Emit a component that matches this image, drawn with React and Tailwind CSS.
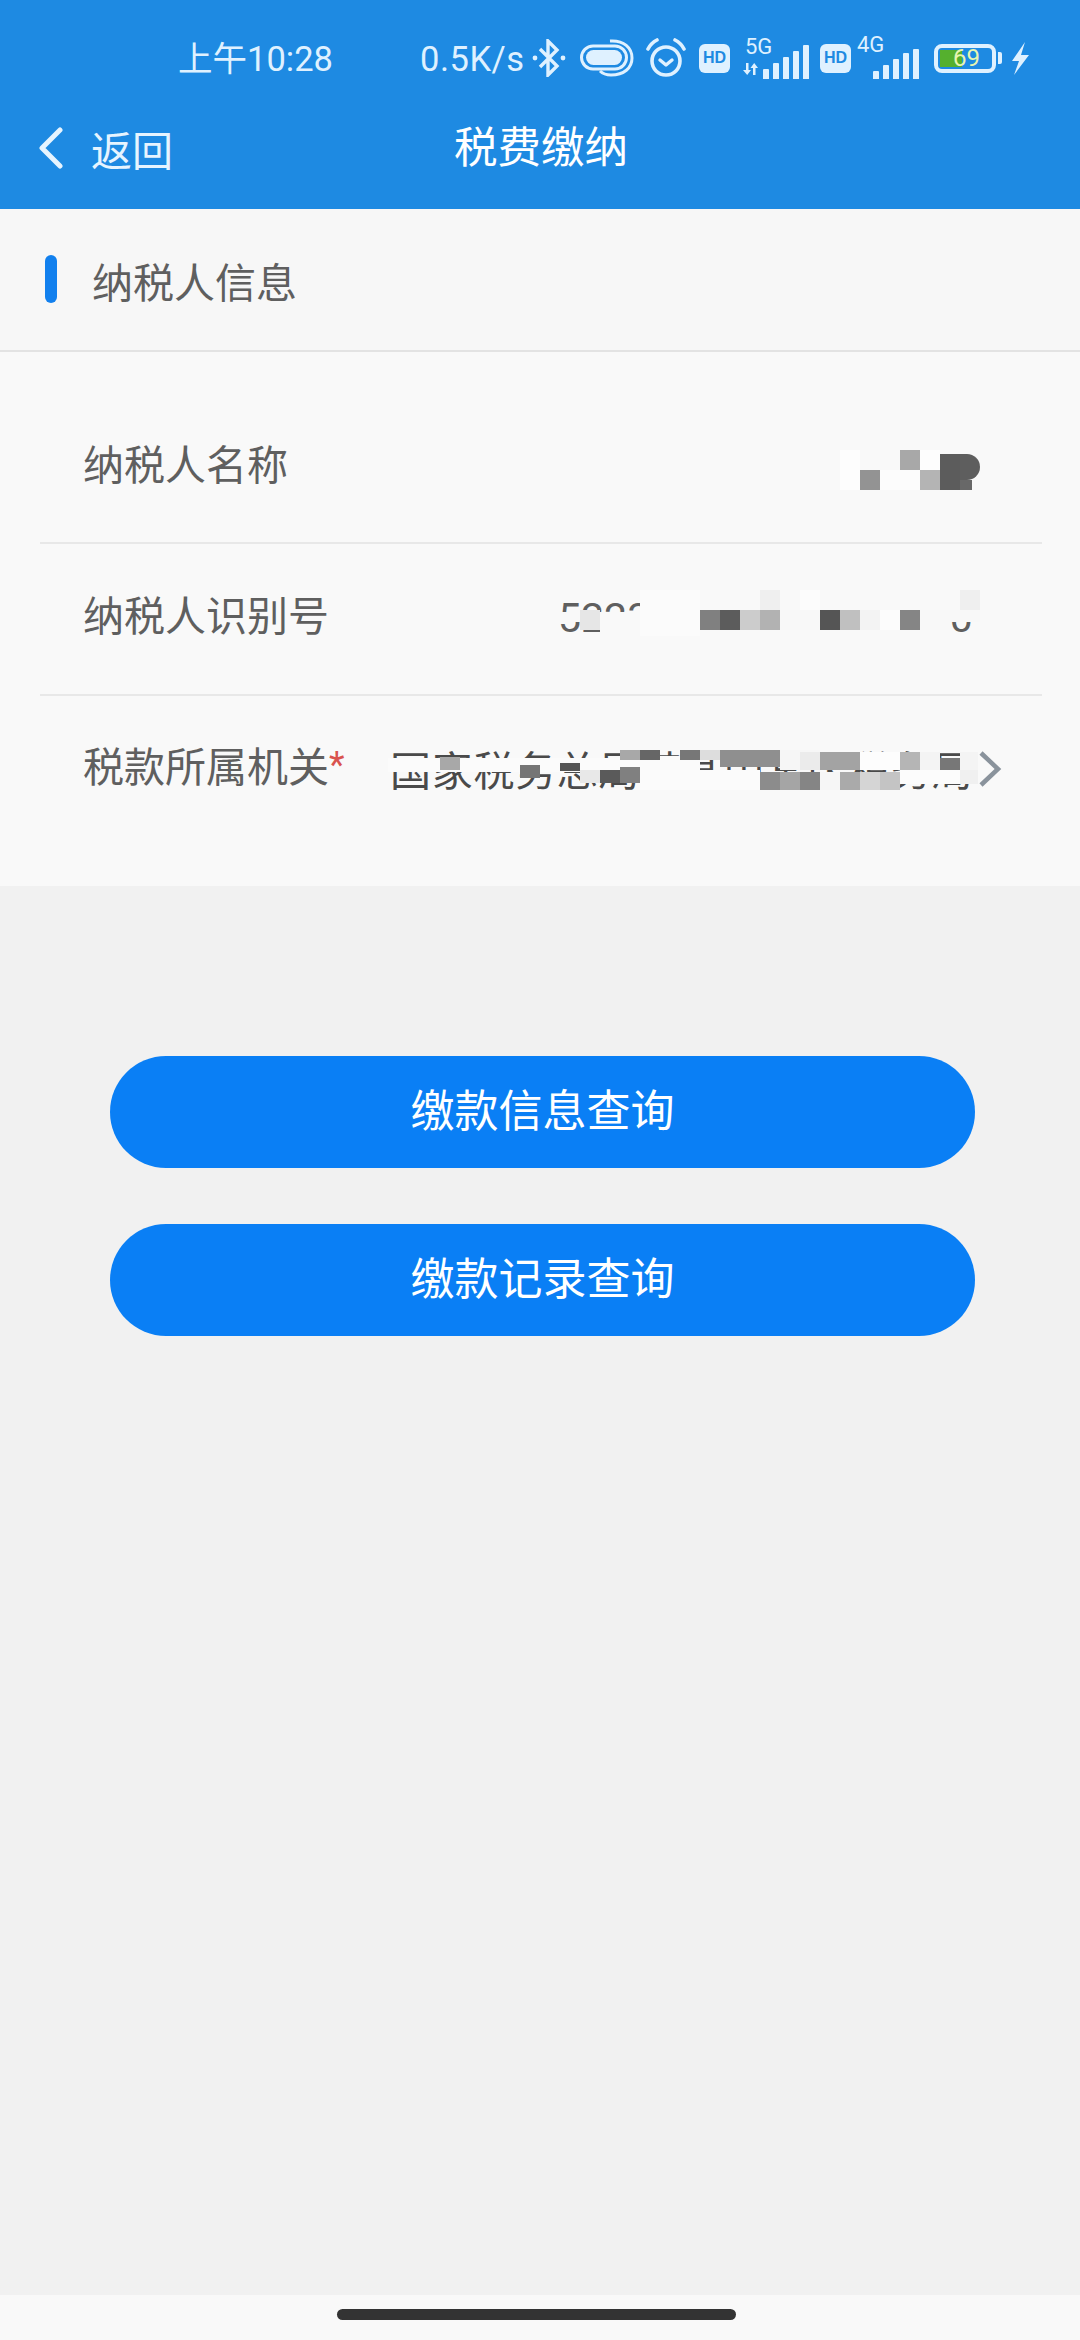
import React from 'react';

// pixelated privacy blur over the values, coordinates are page pixels
const nameCells = [
  { x: 836, y: 440, w: 150, h: 54, c: '#f9f9f9' },
  { x: 840, y: 450, w: 20, h: 40, c: '#fdfdfd' },
  { x: 880, y: 470, w: 40, h: 20, c: '#fcfcfc' },
  { x: 900, y: 450, w: 20, h: 20, c: '#a8a8a8' },
  { x: 920, y: 450, w: 20, h: 20, c: '#fdfdfd' },
  { x: 860, y: 470, w: 20, h: 20, c: '#939393' },
  { x: 920, y: 470, w: 20, h: 20, c: '#b4b4b4' },
  { x: 940, y: 454, w: 20, h: 36, c: '#5c5c5c' },
  { x: 960, y: 454, w: 20, h: 26, c: '#5e5e5e', r: '0 14px 14px 0' },
  { x: 960, y: 480, w: 12, h: 10, c: '#686868' },
];

const idCells = [
  { x: 556, y: 612, w: 104, h: 10, c: '#f9f9f9' },
  { x: 580, y: 610, w: 20, h: 20, c: '#e6e6e6' },
  { x: 600, y: 622, w: 60, h: 14, c: '#f9f9f9' },
  { x: 640, y: 590, w: 60, h: 46, c: '#fbfbfb' },
  { x: 700, y: 590, w: 280, h: 20, c: '#f9f9f9' },
  { x: 760, y: 590, w: 20, h: 20, c: '#efefef' },
  { x: 800, y: 590, w: 20, h: 20, c: '#fcfcfc' },
  { x: 960, y: 590, w: 20, h: 20, c: '#efefef' },
  { x: 700, y: 630, w: 250, h: 6, c: '#f9f9f9' },
  { x: 700, y: 610, w: 20, h: 20, c: '#808080' },
  { x: 720, y: 610, w: 20, h: 20, c: '#5c5c5c' },
  { x: 740, y: 610, w: 20, h: 20, c: '#cccccc' },
  { x: 760, y: 610, w: 20, h: 20, c: '#b2b2b2' },
  { x: 780, y: 610, w: 40, h: 20, c: '#f8f8f8' },
  { x: 820, y: 610, w: 20, h: 20, c: '#555555' },
  { x: 840, y: 610, w: 20, h: 20, c: '#c0c0c0' },
  { x: 860, y: 610, w: 20, h: 20, c: '#f3f3f3' },
  { x: 880, y: 610, w: 20, h: 20, c: '#fcfcfc' },
  { x: 900, y: 610, w: 20, h: 20, c: '#858585' },
  { x: 920, y: 610, w: 30, h: 20, c: '#f8f8f8' },
  { x: 950, y: 610, w: 30, h: 12, c: '#f8f8f8' },
];

const officeCells = [
  { x: 388, y: 758, w: 252, h: 14, c: '#fbfbfb' },
  { x: 640, y: 756, w: 60, h: 16, c: '#fafafa' },
  { x: 440, y: 757, w: 20, h: 13, c: '#a8a8a8' },
  { x: 520, y: 765, w: 20, h: 13, c: '#757575' },
  { x: 560, y: 763, w: 20, h: 8, c: '#555555' },
  { x: 580, y: 770, w: 20, h: 13, c: '#e8e8e8' },
  { x: 600, y: 770, w: 20, h: 13, c: '#5a5a5a' },
  { x: 620, y: 767, w: 20, h: 16, c: '#808080' },
  { x: 620, y: 750, w: 20, h: 10, c: '#a8a8a8' },
  { x: 640, y: 750, w: 20, h: 10, c: '#666666' },
  { x: 680, y: 750, w: 20, h: 10, c: '#777777' },
  { x: 700, y: 750, w: 20, h: 10, c: '#dddddd' },
  { x: 720, y: 750, w: 60, h: 17, c: '#8f8f8f' },
  { x: 780, y: 750, w: 40, h: 20, c: '#f6f6f6' },
  { x: 800, y: 752, w: 20, h: 18, c: '#ebebeb' },
  { x: 820, y: 752, w: 40, h: 18, c: '#a3a3a3' },
  { x: 860, y: 752, w: 40, h: 18, c: '#fdfdfd' },
  { x: 900, y: 752, w: 20, h: 18, c: '#b5b5b5' },
  { x: 920, y: 752, w: 20, h: 18, c: '#f4f4f4' },
  { x: 940, y: 758, w: 20, h: 12, c: '#777777' },
  { x: 960, y: 752, w: 18, h: 18, c: '#f4f4f4' },
  { x: 640, y: 770, w: 120, h: 20, c: '#fbfbfb' },
  { x: 760, y: 772, w: 20, h: 18, c: '#8c8c8c' },
  { x: 780, y: 772, w: 20, h: 18, c: '#a5a5a5' },
  { x: 800, y: 772, w: 20, h: 18, c: '#858585' },
  { x: 820, y: 772, w: 20, h: 18, c: '#f6f6f6' },
  { x: 840, y: 772, w: 20, h: 18, c: '#aaaaaa' },
  { x: 860, y: 772, w: 20, h: 18, c: '#d5d5d5' },
  { x: 880, y: 772, w: 20, h: 18, c: '#c4c4c4' },
  { x: 900, y: 770, w: 60, h: 14, c: '#fcfcfc' },
  { x: 960, y: 770, w: 18, h: 14, c: '#f0f0f0' },
];

const Mosaic = ({ cells, originX, originY }) => (
  <>
    {cells.map((cell, i) => (
      <div
        key={i}
        className="absolute"
        style={{
          left: cell.x - originX,
          top: cell.y - originY,
          width: cell.w,
          height: cell.h,
          backgroundColor: cell.c,
          borderRadius: cell.r,
        }}
      />
    ))}
  </>
);

const BluetoothIcon = () => (
  <svg width="34" height="38" viewBox="0 0 34 38" fill="none" stroke="#dff1ff" strokeWidth="3.4">
    <path d="M8 10 L25 27 L16 36 V2 L25 11 L8 28" />
    <circle cx="3" cy="19" r="2.4" fill="#dff1ff" stroke="none" />
    <circle cx="31" cy="19" r="2.4" fill="#dff1ff" stroke="none" />
  </svg>
);

const PillIcon = () => (
  <svg width="54" height="38" viewBox="0 0 54 38" fill="none">
    <rect x="1.5" y="7" width="45" height="23" rx="11.5" stroke="#dff1ff" strokeWidth="3" />
    <rect x="6" y="11" width="36" height="15" rx="7.5" fill="#dff1ff" />
    <path d="M30 2 C44 1 52 9 52 19 C52 29 44 36 31 36 C25 36 22 34 20 32" stroke="#dff1ff" strokeWidth="3" />
  </svg>
);

const AlarmIcon = () => (
  <svg width="42" height="40" viewBox="0 0 42 40" fill="none" stroke="#dff1ff">
    <circle cx="21" cy="23" r="14" strokeWidth="3.6" />
    <path d="M15 22 L21 27 L27 22" strokeWidth="3.4" strokeLinecap="round" strokeLinejoin="round" />
    <path d="M3 11 C5 7 8 4 12 2" strokeWidth="3.6" strokeLinecap="round" />
    <path d="M39 11 C37 7 34 4 30 2" strokeWidth="3.6" strokeLinecap="round" />
  </svg>
);

const DataArrows = () => (
  <svg width="15" height="12" viewBox="0 0 15 12" fill="#dff1ff">
    <path d="M3 0 H5.5 V7 H8 L4.2 12 L0 7 H3 Z" />
    <path d="M10 12 H12.5 V5 H15 L11.2 0 L7.5 5 H10 Z" />
  </svg>
);

const HdBadge = ({ className }) => (
  <div className={`w-[31px] h-[29px] rounded-[6px] bg-[#dff1ff] flex items-center justify-center text-[16px] font-bold text-[#1e8ae2] font-['Liberation_Sans',sans-serif] ${className}`}>
    HD
  </div>
);

const SignalBars = ({ heights }) => (
  <div className="flex items-end gap-[4px]">
    {heights.map((h, i) => (
      <div key={i} className="w-[6px] bg-[#dff1ff] rounded-t-[1px]" style={{ height: h }} />
    ))}
  </div>
);

const InfoRow = ({ height, top, children, label, star }) => (
  <div className={`relative ${height} ${top} pl-[83px] flex items-start`}>
    <span className="text-[41px] leading-[56px] text-[#5f5f5f]">{label}</span>
    {star && <span className="text-[36px] leading-[50px] text-[#d9534f]">*</span>}
    {children}
  </div>
);

const PayButton = ({ label }) => (
  <button className="w-[865px] h-[112px] rounded-full bg-[#0a7ff5] text-white text-[44px]">
    {label}
  </button>
);

export default function App() {
  return (
    <div className="relative w-[1080px] h-[2340px] flex flex-col bg-[#f1f1f1] font-['Roboto','Noto_Sans_CJK_SC',sans-serif] overflow-hidden">
      {/* Header */}
      <header className="h-[209px] bg-[#1e8ae2] pt-[20px]">
        <div className="h-[76px] flex items-center pl-[178px] text-[#dff1ff]">
          <span className="text-[34.5px] w-[242px] mt-[3px]">上午10:28</span>
          <span className="text-[34.5px] w-[112px] mt-[3px] tracking-[0.5px]">0.5K/s</span>
          <BluetoothIcon />
          <div className="ml-[14px]"><PillIcon /></div>
          <div className="ml-[11px]"><AlarmIcon /></div>
          <HdBadge className="ml-[12px]" />
          <div className="relative w-[80px] h-[76px]">
            <span className="absolute left-[15px] top-[16px] text-[22px] leading-[22px]">5G</span>
            <div className="absolute left-[13px] top-[43px]"><DataArrows /></div>
            <div className="absolute left-[33px] top-[25px] h-[34px] flex items-end">
              <SignalBars heights={[10, 16, 22, 28, 34]} />
            </div>
          </div>
          <HdBadge className="ml-[10px]" />
          <div className="relative w-[83px] h-[76px]">
            <span className="absolute left-[6px] top-[14px] text-[22px] leading-[22px]">4G</span>
            <div className="absolute left-[22px] top-[25px] h-[34px] flex items-end">
              <SignalBars heights={[8, 14, 20, 26, 30]} />
            </div>
          </div>
          <div className="w-[62px] h-[29px] rounded-[8px] border-[4px] border-[#dff1ff] flex items-center p-[2px]">
            <div className="relative w-[50px] h-[17px]">
              <div className="w-[22px] h-[17px] bg-[#55b02e]" />
              <span className="absolute left-[13px] -top-[4px] text-[24px] leading-[25px] text-[#e8f5b0]">69</span>
            </div>
          </div>
          <div className="ml-[2px] w-[4px] h-[12px] rounded-r-[2px] bg-[#dff1ff]" />
          <svg className="ml-[9px]" width="18" height="33" viewBox="0 0 18 33" fill="#dff1ff">
            <path d="M14 0 L1 19 H8 L3 33 L18 13 H10 Z" />
          </svg>
        </div>
        <div className="h-[104px] grid grid-cols-[1fr_auto_1fr] items-center text-white">
          <div className="flex items-center pl-[38px] text-[#e6f4ff]">
            <svg width="26" height="42" viewBox="0 0 26 42" fill="none" stroke="currentColor" strokeWidth="5" strokeLinecap="round" strokeLinejoin="round">
              <path d="M22 3 L4 21 L22 39" />
            </svg>
            <span className="ml-[27px] mt-[9px] text-[41px]">返回</span>
          </div>
          <h1 className="text-[43.5px] font-normal mt-[2px] ml-[2px]">税费缴纳</h1>
          <div />
        </div>
      </header>

      {/* Section title */}
      <div className="h-[143px] bg-[#f7f7f7] border-b-2 border-[#e3e3e3] flex items-center pl-[45px]">
        <div className="w-[12px] h-[48px] -mt-[2px] rounded-full bg-[#1280ee]" />
        <span className="ml-[35px] mt-[10px] text-[41px] text-[#5f5f5f]">纳税人信息</span>
      </div>

      {/* Taxpayer info */}
      <div className="h-[534px] bg-[#f9f9f9] flex flex-col">
        <InfoRow height="h-[190px]" top="pt-[86px]" label="纳税人名称">
          <span className="absolute left-[840px] top-[92px] text-[41px] leading-[48px] text-[#5f5f5f]">某某某</span>
          <Mosaic cells={nameCells} originX={0} originY={352} />
        </InfoRow>
        <div className="ml-[40px] w-[1002px] h-[2px] bg-[#e8e8e8]" />
        <InfoRow height="h-[150px]" top="pt-[45px]" label="纳税人识别号">
          <span className="absolute left-[558px] top-[50px] text-[41px] leading-[48px] text-[#5f5f5f]">522300000000000000</span>
          <Mosaic cells={idCells} originX={0} originY={544} />
        </InfoRow>
        <div className="ml-[40px] w-[1002px] h-[2px] bg-[#e8e8e8]" />
        <InfoRow height="h-[190px]" top="pt-[44px]" label="税款所属机关" star>
          <span className="absolute left-[390px] top-[48px] whitespace-nowrap text-[41px] tracking-[0.7px] leading-[56px] text-[#4a4a4a]">国家税务总局某某中某区税务局</span>
          <Mosaic cells={officeCells} originX={0} originY={696} />
          <svg className="absolute left-[978px] top-[54px]" width="24" height="38" viewBox="0 0 24 38" fill="none" stroke="#8a939c" strokeWidth="4.5">
            <path d="M3 3 L20 19 L3 35" />
          </svg>
        </InfoRow>
      </div>

      {/* Actions */}
      <div className="flex flex-col gap-[56px] pl-[110px] pt-[170px]">
        <PayButton label="缴款信息查询" />
        <PayButton label="缴款记录查询" />
      </div>

      {/* Gesture bar */}
      <div className="mt-auto h-[45px] bg-[#f9f9f9] flex justify-center pt-[14px] pr-[7px]">
        <div className="w-[399px] h-[11px] rounded-full bg-[#333333]" />
      </div>
    </div>
  );
}
